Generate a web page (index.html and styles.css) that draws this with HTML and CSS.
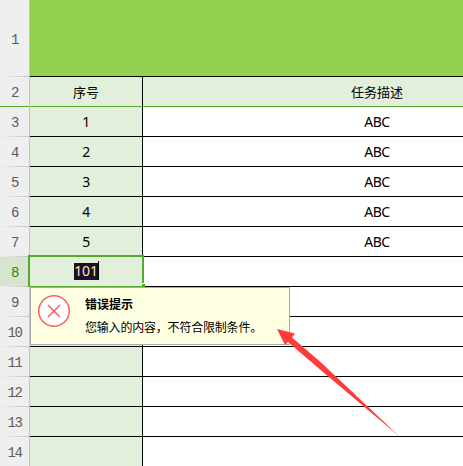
FILE: index.html
```
<!DOCTYPE html>
<html lang="zh-CN">
<head>
<meta charset="utf-8">
<title>任务表</title>
<link rel="stylesheet" href="styles.css">
</head>
<body>
<main class="sheet">
  <div class="row title"><div class="head">1</div><div class="banner"></div></div>
  <div class="row labels"><div class="head">2</div><div class="cell no">序号</div><div class="cell task">任务描述</div></div>
  <div class="row"><div class="head">3</div><div class="cell no">1</div><div class="cell task">ABC</div></div>
  <div class="row"><div class="head">4</div><div class="cell no">2</div><div class="cell task">ABC</div></div>
  <div class="row"><div class="head">5</div><div class="cell no">3</div><div class="cell task">ABC</div></div>
  <div class="row"><div class="head">6</div><div class="cell no">4</div><div class="cell task">ABC</div></div>
  <div class="row"><div class="head">7</div><div class="cell no">5</div><div class="cell task">ABC</div></div>
  <div class="row active"><div class="head">8</div><div class="cell no"><span class="edit">101</span><span class="selection"></span><span class="handle"></span>
    <div class="tip">
      <svg class="error" viewBox="0 0 34 34"><circle cx="17" cy="17" r="15.3"/><path d="M11 11 23 23M23 11 11 23"/></svg>
      <div class="message"><strong>错误提示</strong><p>您输入的内容，不符合限制条件。</p></div>
    </div></div><div class="cell task"></div></div>
  <div class="row"><div class="head">9</div><div class="cell no"></div><div class="cell task"></div></div>
  <div class="row"><div class="head">10</div><div class="cell no"></div><div class="cell task"></div></div>
  <div class="row"><div class="head">11</div><div class="cell no"></div><div class="cell task"></div></div>
  <div class="row"><div class="head">12</div><div class="cell no"></div><div class="cell task"></div></div>
  <div class="row"><div class="head">13</div><div class="cell no"></div><div class="cell task"></div></div>
  <div class="row"><div class="head">14</div><div class="cell no"></div><div class="cell task"></div></div>
  <svg class="arrow" viewBox="0 0 124 110"><path d="M0 0 18 4.500 15 8.500 43 32.500 122.500 107.500 43 40.500 11 13 8 16Z"/></svg>
</main>
</body>
</html>
```
FILE: styles.css
```
* { box-sizing: border-box; }
body { margin: 0; overflow: hidden; background: #fff; font: 14px/18px "Noto Sans", "Noto Sans CJK SC", sans-serif; color: #000; }
.sheet { position: relative; width: 463px; height: 466px; overflow: hidden; }
.row { display: grid; grid-template-columns: 30px 113px 468px; height: 30px; }
.title { height: 77px; }
.head { position: relative; display: flex; align-items: center; justify-content: center; padding-top: 2px; background: #efefef; border-right: 1px solid #c3c3c3; color: #5c5c5c; font: 14px/16px "Liberation Mono", monospace; letter-spacing: -1.4px; }
.head::after { content: ""; position: absolute; left: 0; right: 0; bottom: 0; height: 1px; background: linear-gradient(90deg, #efefef, #c3c3c3); }
.banner { grid-column: 2 / 4; background: #92d050; border-bottom: 1px solid #000; }
.cell { position: relative; display: flex; align-items: center; justify-content: center; border-bottom: 1px solid #000; letter-spacing: -.5px; }
.no { background: #e2efda; border-right: 1px solid #000; }
.labels .cell { background: #e2efda; border-bottom-color: #57a82e; font-size: 13px; letter-spacing: 0; }
.labels .head::after { background: #57a82e; }
.active .head { background: #d6e5cf; color: #2c8a06; }
.edit { position: relative; height: 17px; line-height: 16px; background: #1d1024; color: #fce5c5; letter-spacing: -.1px; }
.edit::after { content: ""; position: absolute; right: -1px; top: -2px; width: 1px; height: 19px; background: #000; }
.selection { position: absolute; left: -2px; top: -2px; width: 116px; height: 32px; border: 2px solid #57a82e; border-bottom-width: 1px; z-index: 2; }
.handle { position: absolute; left: 112px; top: 27px; width: 3px; height: 3px; background: #57a82e; box-shadow: 0 -1px #fff; z-index: 3; }
.tip { position: absolute; z-index: 2; left: 0; top: 30px; width: 260px; height: 58px; display: flex; gap: 14px; padding: 6px 0 0 6px; background: #ffffe1; border: 1px solid #aaa; font-size: 12px; line-height: 18px; white-space: nowrap; letter-spacing: 0; }
.error { width: 34px; height: 34px; flex: none; fill: #fff; stroke: #f96265; stroke-width: 1.5; }
.message { padding-top: 2px; }
.message strong { display: block; font-weight: 700; }
.message p { margin: 5px 0 0; letter-spacing: -.2px; }
.arrow { position: absolute; z-index: 4; left: 277px; top: 329px; width: 124px; height: 110px; fill: #ff3b3b; }
```
